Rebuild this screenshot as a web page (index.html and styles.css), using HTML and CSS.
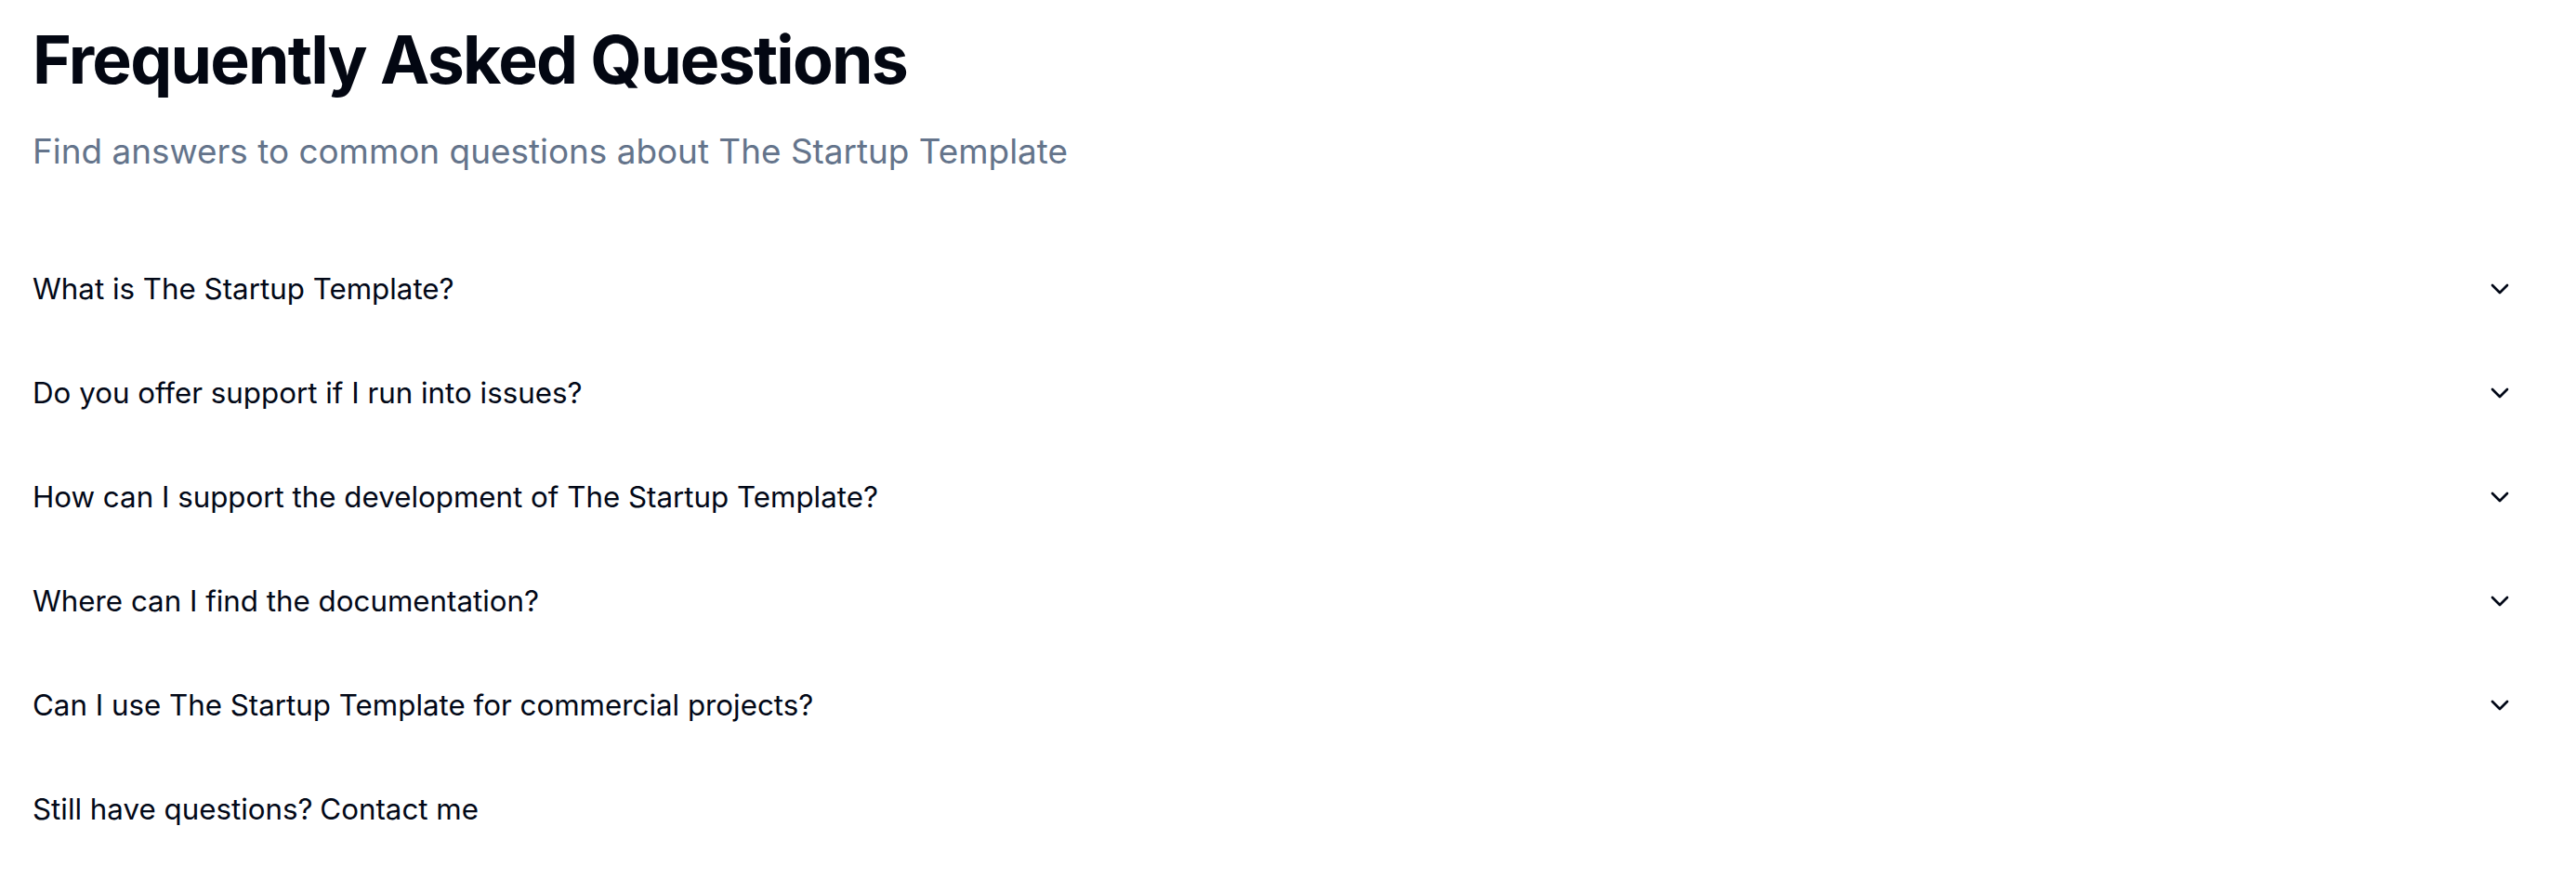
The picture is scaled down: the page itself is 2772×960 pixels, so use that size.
FILE: index.html
```html
<!DOCTYPE html>
<html lang="en">
<head>
<meta charset="utf-8">
<title>FAQ</title>
<link rel="stylesheet" href="styles.css">
</head>
<body>
<main class="faq">
  <header class="faq-header">
    <h1 class="faq-title">Frequently Asked Questions</h1>
    <p class="faq-subtitle">Find answers to common questions about The Startup Template</p>
  </header>
  <div class="faq-list">
    <div class="faq-item">
      <span class="faq-question">What is The Startup Template?</span>
      <svg class="chevron" viewBox="0 0 24 24" fill="none" stroke="currentColor" stroke-width="2" stroke-linecap="round" stroke-linejoin="round"><path d="m6 9 6 6 6-6"/></svg>
    </div>
    <div class="faq-item">
      <span class="faq-question">Do you offer support if I run into issues?</span>
      <svg class="chevron" viewBox="0 0 24 24" fill="none" stroke="currentColor" stroke-width="2" stroke-linecap="round" stroke-linejoin="round"><path d="m6 9 6 6 6-6"/></svg>
    </div>
    <div class="faq-item">
      <span class="faq-question">How can I support the development of The Startup Template?</span>
      <svg class="chevron" viewBox="0 0 24 24" fill="none" stroke="currentColor" stroke-width="2" stroke-linecap="round" stroke-linejoin="round"><path d="m6 9 6 6 6-6"/></svg>
    </div>
    <div class="faq-item">
      <span class="faq-question">Where can I find the documentation?</span>
      <svg class="chevron" viewBox="0 0 24 24" fill="none" stroke="currentColor" stroke-width="2" stroke-linecap="round" stroke-linejoin="round"><path d="m6 9 6 6 6-6"/></svg>
    </div>
    <div class="faq-item">
      <span class="faq-question">Can I use The Startup Template for commercial projects?</span>
      <svg class="chevron" viewBox="0 0 24 24" fill="none" stroke="currentColor" stroke-width="2" stroke-linecap="round" stroke-linejoin="round"><path d="m6 9 6 6 6-6"/></svg>
    </div>
  </div>
  <p class="faq-contact">Still have questions? <a class="contact-link" href="#">Contact me</a></p>
</main>
</body>
</html>
```

FILE: styles.css
```css
* {
  box-sizing: border-box;
}

html, body {
  margin: 0;
  padding: 0;
  background: #ffffff;
}

body {
  font-family: Inter, "Noto Sans", "Liberation Sans", sans-serif;
  color: #020817;
}

.faq {
  padding: 29px 35px 0 35px;
}

.faq-header {
  display: flex;
  flex-direction: column;
}

.faq-title {
  margin: 0;
  font-size: 71.5px;
  line-height: 1;
  font-weight: 700;
  letter-spacing: -0.025em;
  color: #030712;
}

.faq-subtitle {
  margin: 44px 0 0 0;
  font-size: 36.9px;
  line-height: 1;
  font-weight: 400;
  color: #64748b;
}

.faq-list {
  margin-top: 74px;
  display: flex;
  flex-direction: column;
}

.faq-item {
  display: flex;
  align-items: center;
  justify-content: space-between;
  height: 112px;
  padding-right: 31px;
}

.faq-question {
  font-size: 31.3px;
  line-height: 45px;
  font-weight: 400;
}

.chevron {
  width: 32px;
  height: 32px;
  flex-shrink: 0;
  color: #020817;
}

.faq-contact {
  margin: 0;
  height: 112px;
  display: flex;
  align-items: center;
  font-size: 31.3px;
  line-height: 45px;
}

.contact-link {
  color: inherit;
  text-decoration: none;
  margin-left: 0.25em;
}
```
